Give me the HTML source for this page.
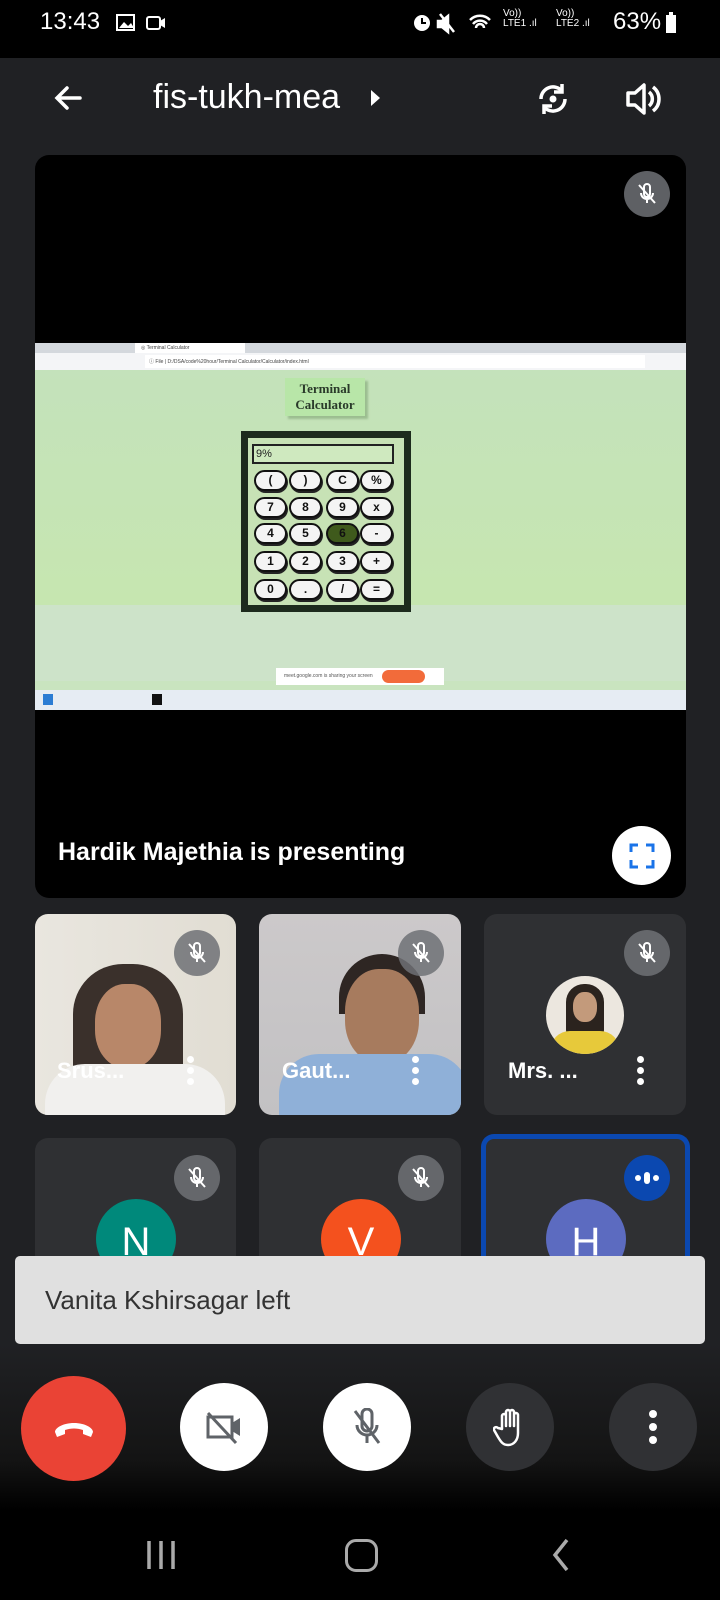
<!DOCTYPE html>
<html><head><meta charset="utf-8"><style>
*{margin:0;padding:0;box-sizing:border-box}
body{width:720px;height:1600px;background:#202124;position:relative;overflow:hidden;font-family:"Liberation Sans",sans-serif;color:#fff}
.abs{position:absolute}
.tile{position:absolute;border-radius:13px;background:#2f3033;overflow:hidden}
.mic{position:absolute;width:46px;height:46px;border-radius:50%;background:rgba(110,113,118,.85);display:flex;align-items:center;justify-content:center}
.dots{position:absolute;width:8px}
.dots i{display:block;width:7px;height:7px;border-radius:50%;background:#fff;margin-bottom:4px}
.name{position:absolute;font-size:22px;font-weight:bold;color:#fff}
.av{position:absolute;width:80px;height:80px;border-radius:50%;color:#fff;font-size:40px;text-align:center;line-height:86px}
.kb{position:absolute;width:33px;height:21px;border:2px solid #111;border-radius:11px;background:#f4f4f4;font:bold 12px "Liberation Sans",sans-serif;color:#111;text-align:center;line-height:17px;box-shadow:1px 2px 0 #222}
.btn{position:absolute;border-radius:50%;display:flex;align-items:center;justify-content:center}
</style></head><body>
<!-- status bar -->
<div class="abs" style="left:0;top:0;width:720px;height:58px;background:#000"></div>
<div class="abs" style="left:40px;top:8px;font-size:24px;color:#fff">13:43</div>
<svg class="abs" style="left:116px;top:12px" width="58" height="22"><rect x="1" y="3" width="17" height="15" fill="none" stroke="#fff" stroke-width="2"/><path d="M3 16l5-6 4 4 3-3 3 5z" fill="#fff"/><rect x="31" y="5" width="13" height="12" rx="2" fill="none" stroke="#fff" stroke-width="2"/><path d="M44 9l5-3v10l-5-3z" fill="#fff"/></svg>
<svg class="abs" style="left:412px;top:10px" width="100" height="26"><circle cx="10" cy="13" r="8" fill="#fff"/><path d="M10 8v5h4" stroke="#000" stroke-width="2" fill="none"/><path d="M36 6l-6 5h-4v6h4l6 5zM28 4l14 18" stroke="#fff" stroke-width="2.5" fill="#fff"/><path d="M58 10a14 14 0 0 1 20 0M61 14a9 9 0 0 1 14 0M64 18a4 4 0 0 1 8 0" stroke="#fff" stroke-width="2.5" fill="none"/></svg>
<div class="abs" style="left:503px;top:9px;font-size:10px;line-height:10px;color:#fff">Vo))<br>LTE1 .ıl</div>
<div class="abs" style="left:556px;top:9px;font-size:10px;line-height:10px;color:#fff">Vo))<br>LTE2 .ıl</div>
<div class="abs" style="left:613px;top:8px;font-size:24px;color:#fff">63%</div>
<div class="abs" style="left:666px;top:15px;width:10px;height:18px;background:#fff"></div>
<div class="abs" style="left:669px;top:12px;width:4px;height:3px;background:#fff"></div>
<!-- header -->
<svg class="abs" style="left:52px;top:82px" width="32" height="32"><path d="M28 16H6M15 6L5 16l10 10" stroke="#fff" stroke-width="3.5" fill="none" stroke-linecap="round"/></svg>
<div class="abs" style="left:153px;top:78px;font-size:34px;color:#fff">fis-tukh-mea</div>
<svg class="abs" style="left:370px;top:88px" width="12" height="20"><path d="M1 2l9 8-9 8z" fill="#fff"/></svg>
<svg class="abs" style="left:533px;top:79px" width="40" height="40"><path d="M8 20a12 12 0 0 1 21-8M32 20a12 12 0 0 1-21 8" stroke="#fff" stroke-width="3.5" fill="none"/><path d="M29 5v8h-8M11 35v-8h8" stroke="#fff" stroke-width="3.5" fill="none"/><circle cx="20" cy="20" r="3.5" fill="#fff"/></svg>
<svg class="abs" style="left:624px;top:80px" width="40" height="38"><path d="M4 13h7l9-8v28l-9-8H4z" fill="none" stroke="#fff" stroke-width="3.5" stroke-linejoin="round"/><path d="M25 12a9 9 0 0 1 0 14M29 7a15 15 0 0 1 0 24" stroke="#fff" stroke-width="3.5" fill="none"/></svg>
<!-- presentation -->
<div class="abs" style="left:35px;top:155px;width:651px;height:743px;background:#000;border-radius:14px;overflow:hidden">
 <div class="abs" style="left:0;top:188px;width:651px;height:367px;background:#c9e4bf">
  <div class="abs" style="left:0;top:0;width:651px;height:10px;background:#d4d8dd"></div>
  <div class="abs" style="left:100px;top:0;width:110px;height:10px;background:#fff;font-size:5px;color:#444;padding:2px 6px">◎ Terminal Calculator</div>
  <div class="abs" style="left:0;top:10px;width:651px;height:17px;background:#f4f5f7"></div>
  <div class="abs" style="left:110px;top:12px;width:500px;height:13px;background:#fff;font-size:5px;color:#444;padding:3px 4px">ⓘ File | D:/DSA/code%20hour/Terminal Calculator/Calculator/index.html</div>
  <div class="abs" style="left:0;top:27px;width:651px;height:235px;background:linear-gradient(#c4e2bb,#c6e6b0)"></div>
  <div class="abs" style="left:0;top:262px;width:651px;height:76px;background:#cde3c9"></div>
  <div class="abs" style="left:250px;top:35px;width:80px;height:38px;background:#b8e6a8;box-shadow:3px 3px 2px #9bbd90;font:bold 13px 'Liberation Serif',serif;color:#2a3a2a;text-align:center;line-height:16px;padding-top:3px">Terminal<br>Calculator</div>
  <div class="abs" style="left:206px;top:88px;width:170px;height:181px;background:#1d2b1d;padding:7px">
   <div style="width:156px;height:167px;background:#c7e2b5;position:relative">
    <div class="abs" style="left:4px;top:6px;width:142px;height:20px;border:2px solid #222;background:#cfe9bf;font-size:11px;color:#222;padding:2px">9%</div>
   </div>
  </div>
 </div>
</div>
<div class="abs" style="left:0;top:0">
<div class="kb" style="left:254px;top:470px">(</div><div class="kb" style="left:289px;top:470px">)</div><div class="kb" style="left:326px;top:470px">C</div><div class="kb" style="left:360px;top:470px">%</div>
<div class="kb" style="left:254px;top:497px">7</div><div class="kb" style="left:289px;top:497px">8</div><div class="kb" style="left:326px;top:497px">9</div><div class="kb" style="left:360px;top:497px">x</div>
<div class="kb" style="left:254px;top:523px">4</div><div class="kb" style="left:289px;top:523px">5</div><div class="kb" style="left:326px;top:523px;background:#3f5a1c">6</div><div class="kb" style="left:360px;top:523px">-</div>
<div class="kb" style="left:254px;top:551px">1</div><div class="kb" style="left:289px;top:551px">2</div><div class="kb" style="left:326px;top:551px">3</div><div class="kb" style="left:360px;top:551px">+</div>
<div class="kb" style="left:254px;top:579px">0</div><div class="kb" style="left:289px;top:579px">.</div><div class="kb" style="left:326px;top:579px">/</div><div class="kb" style="left:360px;top:579px">=</div>
</div>
<div class="abs" style="left:276px;top:668px;width:168px;height:17px;background:#fff;font-size:5px;color:#555;padding:5px 8px">meet.google.com is sharing your screen</div>
<div class="abs" style="left:382px;top:670px;width:43px;height:13px;background:#f26b3a;border-radius:7px"></div>
<div class="abs" style="left:35px;top:690px;width:651px;height:20px;background:#e6ecf3"></div>
<div class="abs" style="left:43px;top:694px;width:10px;height:11px;background:#2b7cd3"></div>
<div class="abs" style="left:152px;top:694px;width:10px;height:11px;background:#111"></div>
<div class="abs" style="left:58px;top:838px;font-size:25px;font-weight:bold;color:#fff">Hardik Majethia is presenting</div>
<div class="btn" style="left:612px;top:826px;width:59px;height:59px;background:#fff">
<svg width="26" height="26"><path d="M2 9V2h7M17 2h7v7M24 17v7h-7M9 24H2v-7" stroke="#1a73e8" stroke-width="3" fill="none"/></svg></div>
<div class="mic" style="left:624px;top:171px"><svg width="24" height="24"><path d="M9 5a3 3 0 0 1 6 0v7a3 3 0 0 1-6 0zM6 11a6 6 0 0 0 12 0M12 17v4" stroke="#fff" stroke-width="2" fill="none"/><path d="M4 3l16 18" stroke="#fff" stroke-width="2"/></svg></div>
<!-- tiles row 1 -->
<div class="tile" style="left:35px;top:914px;width:201px;height:201px;background:linear-gradient(90deg,#e9e6df,#e1ddd3)">
 <div class="abs" style="left:38px;top:50px;width:110px;height:160px;border-radius:50px 50px 0 0;background:#3a302b"></div>
 <div class="abs" style="left:60px;top:70px;width:66px;height:84px;border-radius:45%;background:#b88769"></div>
 <div class="abs" style="left:10px;top:150px;width:180px;height:60px;border-radius:40px 40px 0 0;background:#f1f0ee"></div>
</div>
<div class="tile" style="left:259px;top:914px;width:202px;height:201px;background:linear-gradient(#ccc9ca,#c2c1c3)">
 <div class="abs" style="left:80px;top:40px;width:86px;height:60px;border-radius:45px 45px 0 0;background:#2e2623"></div>
 <div class="abs" style="left:86px;top:55px;width:74px;height:94px;border-radius:45%;background:#a77b5e"></div>
 <div class="abs" style="left:20px;top:140px;width:190px;height:70px;border-radius:40px 40px 0 0;background:#8fb0d8"></div>
</div>
<div class="tile" style="left:484px;top:914px;width:202px;height:201px">
 <div class="abs" style="left:62px;top:62px;width:78px;height:78px;border-radius:50%;background:#ece7df;overflow:hidden">
  <div class="abs" style="left:20px;top:8px;width:38px;height:64px;border-radius:18px;background:#2b231e"></div>
  <div class="abs" style="left:27px;top:16px;width:24px;height:30px;border-radius:45%;background:#c39a7b"></div>
  <div class="abs" style="left:4px;top:55px;width:70px;height:30px;border-radius:20px 20px 0 0;background:#e7c93a"></div>
 </div>
</div>
<div class="mic" style="left:174px;top:930px"><svg width="24" height="24"><path d="M9 5a3 3 0 0 1 6 0v7a3 3 0 0 1-6 0zM6 11a6 6 0 0 0 12 0M12 17v4" stroke="#fff" stroke-width="2" fill="none"/><path d="M4 3l16 18" stroke="#fff" stroke-width="2"/></svg></div>
<div class="mic" style="left:398px;top:930px"><svg width="24" height="24"><path d="M9 5a3 3 0 0 1 6 0v7a3 3 0 0 1-6 0zM6 11a6 6 0 0 0 12 0M12 17v4" stroke="#fff" stroke-width="2" fill="none"/><path d="M4 3l16 18" stroke="#fff" stroke-width="2"/></svg></div>
<div class="mic" style="left:624px;top:930px"><svg width="24" height="24"><path d="M9 5a3 3 0 0 1 6 0v7a3 3 0 0 1-6 0zM6 11a6 6 0 0 0 12 0M12 17v4" stroke="#fff" stroke-width="2" fill="none"/><path d="M4 3l16 18" stroke="#fff" stroke-width="2"/></svg></div>
<div class="name" style="left:57px;top:1058px">Srus...</div>
<div class="name" style="left:282px;top:1058px">Gaut...</div>
<div class="name" style="left:508px;top:1058px">Mrs. ...</div>
<div class="dots" style="left:187px;top:1056px"><i></i><i></i><i></i></div>
<div class="dots" style="left:412px;top:1056px"><i></i><i></i><i></i></div>
<div class="dots" style="left:637px;top:1056px"><i></i><i></i><i></i></div>
<!-- row 2 -->
<div class="tile" style="left:35px;top:1138px;width:201px;height:150px"></div>
<div class="tile" style="left:259px;top:1138px;width:202px;height:150px"></div>
<div class="tile" style="left:481px;top:1134px;width:209px;height:154px;border:5px solid #0b48b0;border-bottom:none"></div>
<div class="av" style="left:96px;top:1199px;background:#00897b">N</div>
<div class="av" style="left:321px;top:1199px;background:#f4511e">V</div>
<div class="av" style="left:546px;top:1199px;background:#5c6bc0">H</div>
<div class="mic" style="left:174px;top:1155px"><svg width="24" height="24"><path d="M9 5a3 3 0 0 1 6 0v7a3 3 0 0 1-6 0zM6 11a6 6 0 0 0 12 0M12 17v4" stroke="#fff" stroke-width="2" fill="none"/><path d="M4 3l16 18" stroke="#fff" stroke-width="2"/></svg></div>
<div class="mic" style="left:398px;top:1155px"><svg width="24" height="24"><path d="M9 5a3 3 0 0 1 6 0v7a3 3 0 0 1-6 0zM6 11a6 6 0 0 0 12 0M12 17v4" stroke="#fff" stroke-width="2" fill="none"/><path d="M4 3l16 18" stroke="#fff" stroke-width="2"/></svg></div>
<div class="btn" style="left:624px;top:1155px;width:46px;height:46px;background:#0b48b0"><svg width="26" height="14"><circle cx="4" cy="7" r="3" fill="#fff"/><rect x="10" y="1" width="6" height="12" rx="3" fill="#fff"/><circle cx="22" cy="7" r="3" fill="#fff"/></svg></div>
<!-- toast -->
<div class="abs" style="left:15px;top:1256px;width:690px;height:88px;background:#e0e0e0;border-radius:5px"></div>
<div class="abs" style="left:45px;top:1285px;font-size:26px;color:#333">Vanita Kshirsagar left</div>
<!-- bottom gradient -->
<div class="abs" style="left:0;top:1344px;width:720px;height:256px;background:linear-gradient(#202124 0%,#141414 45%,#000 65%)"></div>
<div class="btn" style="left:21px;top:1376px;width:105px;height:105px;background:#ea4335"><svg width="44" height="22"><path d="M3 14c0-4 8-9 19-9s19 5 19 9l-2 5-8-3v-4c-6-2-12-2-18 0v4l-8 3z" fill="#fff"/></svg></div>
<div class="btn" style="left:180px;top:1383px;width:88px;height:88px;background:#fff"><svg width="40" height="36"><rect x="4" y="8" width="24" height="20" fill="none" stroke="#5f6368" stroke-width="3"/><path d="M28 14l8-5v18l-8-5z" fill="#5f6368"/><path d="M4 4l28 30" stroke="#5f6368" stroke-width="3"/></svg></div>
<div class="btn" style="left:323px;top:1383px;width:88px;height:88px;background:#fff"><svg width="34" height="38"><path d="M12 6a5 5 0 0 1 10 0v12a5 5 0 0 1-10 0zM7 17a10 10 0 0 0 20 0M17 27v8" stroke="#5f6368" stroke-width="3" fill="none"/><path d="M5 3l24 32" stroke="#5f6368" stroke-width="3"/></svg></div>
<div class="btn" style="left:466px;top:1383px;width:88px;height:88px;background:#303134"><svg width="34" height="40"><path d="M9 22V9a2 2 0 0 1 4 0v10V5a2 2 0 0 1 4 0v14V5a2 2 0 0 1 4 0v14V8a2 2 0 0 1 4 0v18c0 7-4 12-10 12-5 0-7-3-10-8l-4-7c-1-2 2-4 4-2z" stroke="#fff" stroke-width="2.5" fill="none" stroke-linejoin="round"/></svg></div>
<div class="btn" style="left:609px;top:1383px;width:88px;height:88px;background:#303134"><svg width="10" height="36"><circle cx="5" cy="5" r="4" fill="#fff"/><circle cx="5" cy="18" r="4" fill="#fff"/><circle cx="5" cy="31" r="4" fill="#fff"/></svg></div>
<!-- nav -->
<svg class="abs" style="left:145px;top:1538px" width="32" height="34"><path d="M4 3v28M16 3v28M28 3v28" stroke="#aaa" stroke-width="3.5"/></svg>
<div class="abs" style="left:345px;top:1539px;width:33px;height:33px;border:3.5px solid #aaa;border-radius:11px"></div>
<svg class="abs" style="left:550px;top:1537px" width="22" height="36"><path d="M17 3L5 18l12 15" stroke="#aaa" stroke-width="3.5" fill="none"/></svg>
</body></html>
